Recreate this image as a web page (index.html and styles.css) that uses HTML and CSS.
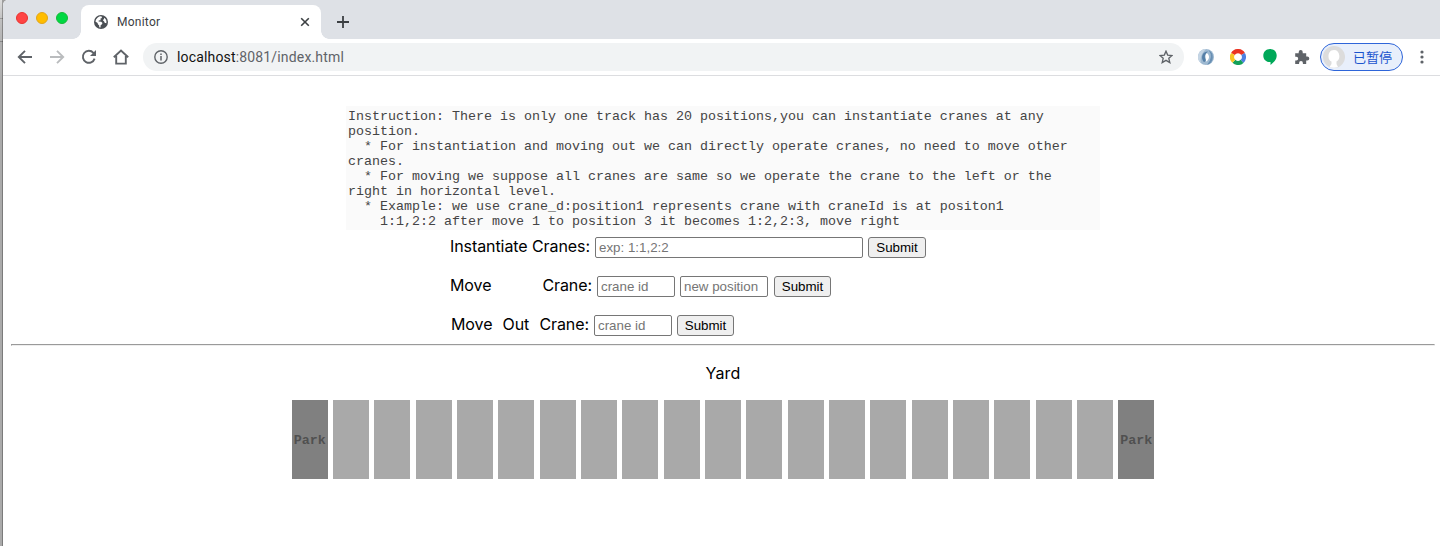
FILE: index.html
```
<!DOCTYPE html>
<html lang="en">
<head>
<meta charset="utf-8">
<title>Monitor</title>
<link rel="stylesheet" href="styles.css">
</head>
<body>
<div class="desktop">
<div class="window">
  <header class="tabstrip">
    <div class="lights"><i class="light red"></i><i class="light yellow"></i><i class="light green"></i></div>
    <div class="tab">
      <svg class="globe" width="14" height="14" viewBox="0 0 14 14"><circle cx="7" cy="7" r="7" fill="#4b4f54"/><path d="M7.6 1.4 8 3 6.5 3.6 6.6 5.2 4.7 5.4 4.6 6.6 7.2 6.7 8.5 8 7.8 9.4 6.7 10 6.5 12.4 5.2 12.2 5.2 10.4 3.9 9.3 3.6 8 1.4 6.4A5.7 5.7 0 0 1 7.6 1.4zM10.4 2.8 9.6 4.5 8.8 5.3 10 6.3 10.7 7.8 12.3 8.3A5.5 5.5 0 0 0 10.4 2.8z" fill="#fff"/></svg>
      <span class="tab-title">Monitor</span>
      <svg class="close" width="10" height="10" viewBox="0 0 10 10"><path d="M1.2 1.2 8.8 8.8M8.8 1.2 1.2 8.8" stroke="#3c4043" stroke-width="1.6"/></svg>
    </div>
    <svg class="plus" width="12" height="12" viewBox="0 0 12 12"><path d="M6 0V12M0 6H12" stroke="#3c4043" stroke-width="1.8"/></svg>
  </header>
  <nav class="toolbar">
    <div class="nav-icons">
      <svg width="16" height="16" viewBox="0 0 16 16"><path d="M15 8H2.2M8 1.8 1.8 8 8 14.2" fill="none" stroke="#5f6368" stroke-width="1.9"/></svg>
      <svg width="16" height="16" viewBox="0 0 16 16"><path d="M1 8H13.8M8 1.8 14.2 8 8 14.2" fill="none" stroke="#babcbe" stroke-width="1.9"/></svg>
      <svg width="16" height="16" viewBox="0 0 16 16"><path d="M13.6 9.6A6 6 0 1 1 12.4 3.8L14 5.4" fill="none" stroke="#5f6368" stroke-width="1.9"/><path d="M15 1V7H9z" fill="#5f6368"/></svg>
      <svg width="16" height="16" viewBox="0 0 16 16"><path d="M.8 8.2 8 1.5 15.2 8.2M3.2 7V14.6H12.8V7" fill="none" stroke="#5f6368" stroke-width="1.9"/></svg>
    </div>
    <div class="address">
      <svg width="14" height="14" viewBox="0 0 14 14"><circle cx="7" cy="7" r="6.2" fill="none" stroke="#5f6368" stroke-width="1.4"/><path d="M7 6V10.5M7 3.4V5" stroke="#5f6368" stroke-width="1.5"/></svg>
      <span class="url">localhost<span class="path">:8081/index.html</span></span>
      <svg width="14" height="14" viewBox="0 0 14 14"><path d="M7 1.2 8.7 5.1 13 5.5 9.8 8.3 10.8 12.6 7 10.3 3.2 12.6 4.2 8.3 1 5.5 5.3 5.1z" fill="none" stroke="#5f6368" stroke-width="1.35"/></svg>
    </div>
    <div class="extensions">
      <svg width="16" height="16" viewBox="0 0 16 16"><circle cx="8" cy="8" r="8" fill="#9eb9d1"/><path d="M8 0A8 8 0 0 0 3 14.2Q1 7 8 0z" fill="#c5d5e4"/><path d="M10.5 1Q16 8 9 15.8A8 8 0 0 0 10.5 1z" fill="#6990b4"/><path d="M10 2.6C4.5 2.6 2.2 8.5 5.8 13 7.8 13 8 11.5 7.4 10 6 7.4 7.5 4.6 10 2.6z" fill="#557fa7"/><path d="M8.8 4C12.3 6.6 11.5 10.8 7.8 12.8 9 9.5 5.8 7.4 8.8 4z" fill="#fff"/></svg>
      <svg width="16" height="16" viewBox="0 0 16 16" fill="none" stroke-width="4.2"><path d="M2.9 5A5.9 5.9 0 0 1 13.1 5" stroke="#ea3323"/><path d="M13.1 5A5.9 5.9 0 0 1 12 12.4" stroke="#4e7fe0"/><path d="M12 12.4A5.9 5.9 0 0 1 3.9 12.3" stroke="#13a05a"/><path d="M3.9 12.3A5.9 5.9 0 0 1 2.9 5" stroke="#f7c526"/></svg>
      <svg width="16" height="16" viewBox="0 0 16 16"><path d="M8 0C12 0 14.7 2.8 14.7 6.6 14.7 11 11.5 13.8 8.5 16V13.1C4.3 13.3 1.3 10.5 1.3 6.7 1.3 2.8 4.2 0 8 0z" fill="#00a859"/></svg>
      <svg width="16" height="16" viewBox="0 0 16 16"><path d="M1.2 4.3H4.7V3A2 2 0 0 1 8.7 3V4.3H12.2V7.6H13.3A2 2 0 0 1 13.3 11.6H12.2V15H8.9V13.9A1.9 1.9 0 0 0 5.1 13.9V15H1.2V11.5H2.3A1.9 1.9 0 0 0 2.3 7.7H1.2z" fill="#5f6368"/></svg>
    </div>
    <div class="profile">
      <svg width="22" height="22" viewBox="0 0 22 22"><circle cx="11" cy="11" r="11" fill="#dcdcdc"/><path d="M11 4C7 4 5.3 7.2 5.5 11 5.6 13.4 7 15 8.5 15.5V18L6.5 21Q11 22.5 15 21L13.5 18V15.5C16 14 16.5 12 16.3 9.5 16 6 14 4 11 4z" fill="#fff"/></svg>
      <span>已暂停</span>
    </div>
    <svg class="menu" width="4" height="14" viewBox="0 0 4 14" fill="#5f6368"><circle cx="2" cy="2" r="1.6"/><circle cx="2" cy="7" r="1.6"/><circle cx="2" cy="12" r="1.6"/></svg>
  </nav>
  <main class="page">
    <pre class="instruction">Instruction: There is only one track has 20 positions,you can instantiate cranes at any
position.
  * For instantiation and moving out we can directly operate cranes, no need to move other
cranes.
  * For moving we suppose all cranes are same so we operate the crane to the left or the
right in horizontal level.
  * Example: we use crane_d:position1 represents crane with craneId is at positon1
    1:1,2:2 after move 1 to position 3 it becomes 1:2,2:3, move right</pre>
    <form class="row row-create">
      <label class="label label-create">Instantiate Cranes:</label>
      <input class="field wide" placeholder="exp: 1:1,2:2"><button class="submit" type="button">Submit</button>
    </form>
    <form class="row row-move">
      <label class="label label-move"><span>Move</span><span>Crane:</span></label>
      <input class="field" placeholder="crane id"><input class="field position" placeholder="new position"><button class="submit narrow" type="button">Submit</button>
    </form>
    <form class="row row-out">
      <label class="label label-out"><span>Move</span><span>Out</span><span>Crane:</span></label>
      <input class="field" placeholder="crane id"><button class="submit narrow" type="button">Submit</button>
    </form>
    <hr class="rule">
    <div class="yard-title">Yard</div>
    <div class="yard">
      <div class="cell park">Park</div>
      <div class="cell"></div><div class="cell"></div><div class="cell"></div><div class="cell"></div><div class="cell"></div>
      <div class="cell"></div><div class="cell"></div><div class="cell"></div><div class="cell"></div><div class="cell"></div>
      <div class="cell"></div><div class="cell"></div><div class="cell"></div><div class="cell"></div><div class="cell"></div>
      <div class="cell"></div><div class="cell"></div><div class="cell"></div><div class="cell"></div>
      <div class="cell park">Park</div>
    </div>
  </main>
</div>
</div>
</body>
</html>
```
FILE: styles.css
```
* { box-sizing: border-box; }
body { margin: 0; background: #fff; }
svg { display: block; flex: none; }
.desktop {
  height: 546px;
  padding-left: 3px;
  overflow: hidden;
  background:
    linear-gradient(90deg, transparent 2px, rgba(0, 0, 0, .28) 2px),
    linear-gradient(#dcdcdc 0, #c4c4c4 18px, #999 18px 19px, #c0c0c0 19px, #b4b4b4 41px, #888 41px 42px, #b0b0b0 42px 46px, #b0b0b0 61px 68px, #aaa 83px);
}
.window { height: 546px; border-top-left-radius: 5px; background: #fff; overflow: hidden; }

.tabstrip { display: flex; height: 39px; background: #dee1e6; }
.lights { display: flex; gap: 8px; width: 78px; padding: 12px 0 0 13px; }
.light { width: 12px; height: 12px; border-radius: 50%; }
.red { background: #ff4444; border: 1px solid #e9332f; }
.yellow { background: #ffbd00; border: 1px solid #e2a51a; }
.green { background: #00d843; border: 1px solid #16ba38; }
.tab { position: relative; display: flex; align-items: center; width: 240px; height: 34px; margin-top: 5px; padding: 0 11px 0 13px; border-radius: 8px 8px 0 0; background: #fff; }
.tab::before, .tab::after { content: ""; position: absolute; bottom: 0; width: 8px; height: 8px; }
.tab::before { left: -8px; background: radial-gradient(circle at 0 0, #dee1e6 7.5px, #fff 8px); }
.tab::after { right: -8px; background: radial-gradient(circle at 100% 0, #dee1e6 7.5px, #fff 8px); }
.tab-title { flex: 1; margin-left: 9px; font: 12px/16px Roboto, sans-serif; letter-spacing: .25px; color: #3c4043; }
.plus { margin: 16px 0 0 16px; }

.toolbar { display: flex; align-items: center; height: 37px; padding: 0 0 1px 14px; border-bottom: 1px solid #dcdde0; }
.nav-icons { display: flex; gap: 16px; width: 126px; }
.address { display: flex; align-items: center; width: 1041px; height: 28px; padding: 0 11px; border-radius: 14px; background: #f1f3f4; }
.url { flex: 1; margin-left: 9px; font: 14px/20px Roboto, sans-serif; letter-spacing: .16px; color: #111; }
.path { color: #5f6368; }
.extensions { display: flex; gap: 16px; margin-left: 14px; }
.profile { display: flex; align-items: center; gap: 8px; width: 83px; height: 28px; margin-left: 10px; padding-left: 2px; border: 1px solid #2e65d9; border-radius: 14px; background: #e8effb; font: 13px/20px "Noto Sans CJK SC", sans-serif; color: #1a54ce; }
.menu { margin-left: 16.5px; }

.page { padding: 30px 5px 0 8px; font: 16px/22px Inter, "Noto Sans CJK SC", sans-serif; letter-spacing: -.08px; color: #000; }
.instruction { width: 754px; height: 124px; margin: 0 0 0 335px; padding: 3px 2px 0; background: #fafafa; font: 13.333px/15px "Courier New", "Liberation Mono", monospace; letter-spacing: 0; color: #444; }
.row { display: flex; align-items: flex-start; height: 21px; margin: 7px 0 18px 439px; }
.row-move { margin: 0 0 18px 439px; }
.row-out { margin: 0 0 8px 440px; }
.label { display: flex; white-space: pre; line-height: 19px; }
.label-create { width: 145px; }
.label-move { width: 147px; justify-content: space-between; padding-right: 5px; }
.label-out { width: 143px; justify-content: space-between; padding-right: 5px; }
.field { width: 78px; height: 21px; margin: 0 5px 0 0; padding: 1px 3px; border: 1px solid #767676; border-radius: 2px; background: #fff; font: 13.333px/17px "Liberation Sans", Arial, sans-serif; }
.field::placeholder { color: #757575; opacity: 1; }
.wide { width: 268px; }
.position { width: 88px; }
.submit { width: 58px; height: 21px; padding: 0; border: 1px solid #767676; border-radius: 3px; background: #efefef; font: 13.333px/17px "Liberation Sans", Arial, sans-serif; color: #000; }
.narrow { width: 57px; }
.row-move .narrow { margin-left: 1px; }
.rule { height: 2px; margin: 0; border: 1px solid; border-color: #9a9a9a #eee #eee #9a9a9a; }
.yard-title { height: 22px; margin-top: 16px; text-align: center; letter-spacing: .2px; }
.yard { display: flex; justify-content: space-between; width: 862.6px; height: 79px; margin: 16px 0 0 280.7px; }
.cell { width: 36px; background: #a9a9a9; }
.park { display: flex; align-items: center; justify-content: center; padding-top: 2px; background: #808080; font: bold 13.333px/15px "Courier New", "Liberation Mono", monospace; letter-spacing: 0; color: #505050; }
```
